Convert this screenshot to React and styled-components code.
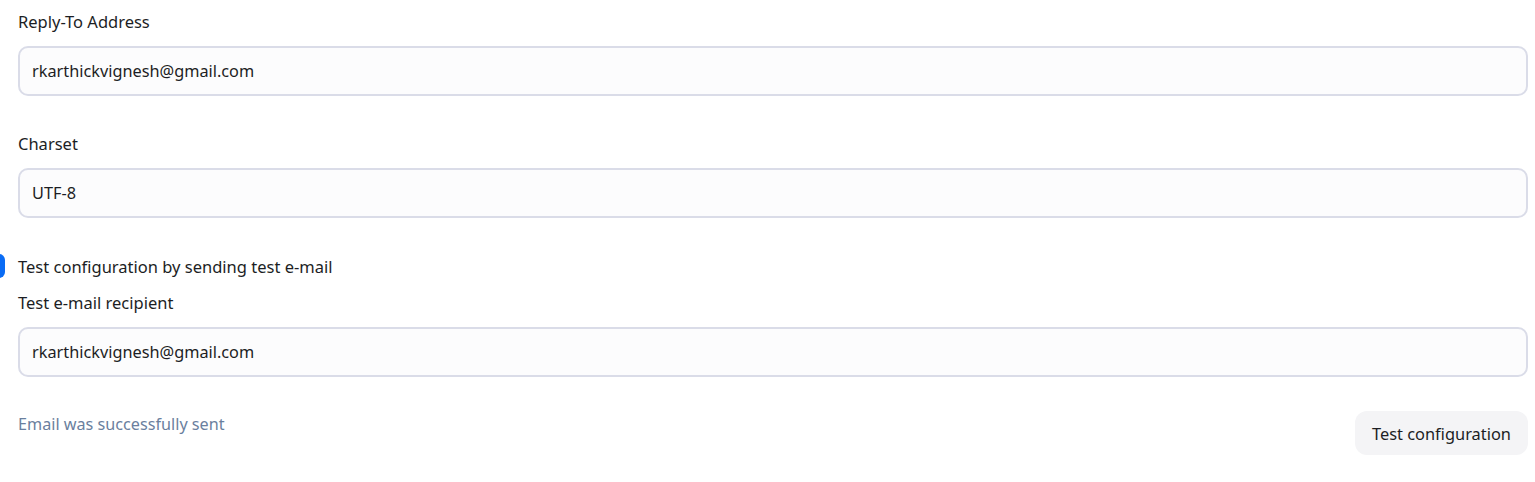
import React from "react";
import styled, { createGlobalStyle } from "styled-components";

const Global = createGlobalStyle`
  html, body { margin: 0; padding: 0; background: #ffffff; }
  body { font-family: "Segoe UI", "Noto Sans", "Open Sans", sans-serif; color: #1c1e24; }
  * { box-sizing: border-box; }
`;

const Page = styled.div`
  width: 1535px;
  height: 482px;
  padding: 10px 7px 0 18px;
  display: flex;
  flex-direction: column;
  overflow: hidden;
`;

const Field = styled.div`
  display: flex;
  flex-direction: column;
  gap: 12px;
  margin-bottom: ${(p) => p.$mb || 0}px;
`;

const Label = styled.label`
  font-size: 16.5px;
  line-height: 24px;
  color: #1c1e24;
`;

const Input = styled.input`
  height: 50px;
  width: 100%;
  border: 2px solid #dadce8;
  border-radius: 10px;
  background: #fcfcfd;
  padding: 0 12px;
  font-family: inherit;
  font-size: 16.3px;
  color: #1c1e24;
  outline: none;
`;

const CheckRow = styled.div`
  position: relative;
  height: 24px;
  display: flex;
  align-items: center;
  margin-bottom: 12px;
`;

const CheckBox = styled.span`
  position: absolute;
  left: -37px;
  top: -1px;
  width: 24px;
  height: 24px;
  border-radius: 6px;
  background: #0a6cf5;
`;

const CheckLabel = styled.span`
  font-size: 16.5px;
  line-height: 24px;
  color: #1c1e24;
`;

const Footer = styled.div`
  display: flex;
  justify-content: space-between;
  align-items: flex-start;
  margin-top: 34px;
`;

const Status = styled.span`
  font-size: 16.2px;
  line-height: 24px;
  padding-top: 1px;
  color: #6a7f9e;
`;

const Button = styled.button`
  height: 44px;
  padding: 0 17px;
  border: none;
  border-radius: 12px;
  background: #f4f4f6;
  font-family: inherit;
  font-size: 16.4px;
  color: #1c1e24;
  cursor: pointer;
`;

export default function App() {
  return (
    <>
      <Global />
      <Page>
        <Field $mb={36}>
          <Label>Reply-To Address</Label>
          <Input defaultValue="rkarthickvignesh@gmail.com" />
        </Field>
        <Field $mb={37}>
          <Label>Charset</Label>
          <Input defaultValue="UTF-8" />
        </Field>
        <CheckRow>
          <CheckBox />
          <CheckLabel>Test configuration by sending test e-mail</CheckLabel>
        </CheckRow>
        <Field>
          <Label>Test e-mail recipient</Label>
          <Input defaultValue="rkarthickvignesh@gmail.com" />
        </Field>
        <Footer>
          <Status>Email was successfully sent</Status>
          <Button>Test configuration</Button>
        </Footer>
      </Page>
    </>
  );
}
